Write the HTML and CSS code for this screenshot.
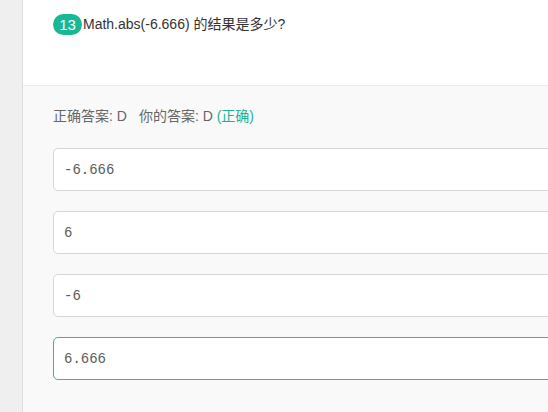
FILE: index.html
```html
<!DOCTYPE html>
<html lang="zh">
<head>
<meta charset="utf-8">
<link rel="stylesheet" href="styles.css">
</head>
<body>
<div class="page">
  <aside class="side"></aside>
  <main class="main">
    <section class="question">
      <span class="badge">13</span><span class="qtext">Math.abs(-6.666) 的结果是多少?</span>
    </section>
    <section class="answers">
      <p class="result">正确答案: D<span class="sp"></span>你的答案: D <span class="ok">(正确)</span></p>
      <div class="opts">
        <div class="opt">-6.666</div>
        <div class="opt">6</div>
        <div class="opt">-6</div>
        <div class="opt sel">6.666</div>
      </div>
    </section>
  </main>
</div>
</body>
</html>
```

FILE: styles.css
```css
html, body {
  margin: 0;
  padding: 0;
  overflow: hidden;
}
body {
  width: 548px;
  height: 412px;
  font-family: "Liberation Sans", Arial, "Noto Sans CJK SC", sans-serif;
}
.page {
  display: flex;
  height: 412px;
}
.side {
  width: 22px;
  flex: none;
  background: #efefef;
  border-right: 1px solid #dddddd;
}
.main {
  flex: 1;
  min-width: 0;
  display: flex;
  flex-direction: column;
  background: #f9f9f9;
}
.question {
  height: 86px;
  box-sizing: border-box;
  background: #ffffff;
  border-bottom: 1px solid #ececec;
  padding: 14px 0 0 30px;
  display: flex;
  align-items: flex-start;
}
.badge {
  display: inline-flex;
  align-items: center;
  justify-content: center;
  width: 29px;
  height: 21px;
  border-radius: 11px;
  background: #19b894;
  color: #ffffff;
  font-size: 15px;
  margin-right: 1px;
}
.qtext {
  font-size: 14px;
  color: #333333;
  line-height: 21px;
}
.answers {
  flex: 1;
  padding: 0 0 0 30px;
  overflow: hidden;
}
.result {
  margin: 21px 0 0;
  font-size: 14px;
  line-height: 19px;
  color: #666666;
  white-space: nowrap;
}
.sp {
  display: inline-block;
  width: 12px;
}
.ok {
  color: #1ab394;
}
.opts {
  margin-top: 22px;
  display: flex;
  flex-direction: column;
  gap: 20px;
  width: 560px;
}
.opt {
  height: 43px;
  box-sizing: border-box;
  background: #ffffff;
  border: 1px solid #d6d6d6;
  border-radius: 5px;
  padding-left: 10px;
  display: flex;
  align-items: center;
  font-family: "Liberation Mono", "DejaVu Sans Mono", monospace;
  font-size: 14px;
  color: #5c5c5c;
}
.opt.sel {
  border-color: #1fc0b4;
}
```
